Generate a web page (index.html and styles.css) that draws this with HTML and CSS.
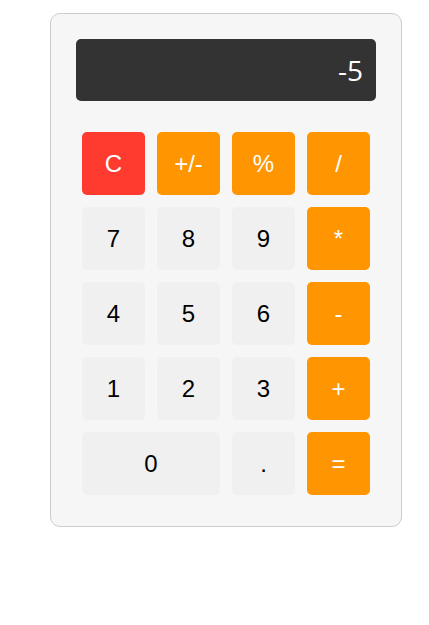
FILE: index.html
```html
<!DOCTYPE html>
<html>
<head>
<meta charset="utf-8">
<link rel="stylesheet" href="styles.css">
</head>
<body>
<div class="calc">
  <div class="display">-5</div>
  <div class="keys">
    <div class="key red">C</div>
    <div class="key op">+/-</div>
    <div class="key op">%</div>
    <div class="key op">/</div>
    <div class="key">7</div>
    <div class="key">8</div>
    <div class="key">9</div>
    <div class="key op">*</div>
    <div class="key">4</div>
    <div class="key">5</div>
    <div class="key">6</div>
    <div class="key op">-</div>
    <div class="key">1</div>
    <div class="key">2</div>
    <div class="key">3</div>
    <div class="key op">+</div>
    <div class="key wide">0</div>
    <div class="key">.</div>
    <div class="key op">=</div>
  </div>
</div>
</body>
</html>
```
FILE: styles.css
```css
html, body {
  margin: 0;
  padding: 0;
  background: #ffffff;
}
body {
  padding: 13px 0 0 50px;
  font-family: "Liberation Sans", Arial, sans-serif;
}
.calc {
  width: 300px;
  padding: 25px;
  background: #f6f6f6;
  border: 1px solid #cccccc;
  border-radius: 10px;
}
.display {
  height: 62px;
  background: #333333;
  border-radius: 5px;
  color: #ffffff;
  font-family: "Open Sans", "Noto Sans", sans-serif;
  font-size: 28px;
  line-height: 62px;
  text-align: right;
  padding-right: 13px;
  box-sizing: border-box;
}
.keys {
  margin-top: 25px;
  padding: 6px;
  display: grid;
  grid-template-columns: repeat(4, 63px);
  grid-auto-rows: 63px;
  gap: 12px;
}
.key {
  background: #f0f0f0;
  border-radius: 5px;
  display: flex;
  align-items: center;
  justify-content: center;
  font-size: 24px;
  color: #000000;
}
.key.op {
  background: #ff9500;
  color: #ffffff;
}
.key.red {
  background: #ff3b30;
  color: #ffffff;
}
.key.wide {
  grid-column: span 2;
}
```
